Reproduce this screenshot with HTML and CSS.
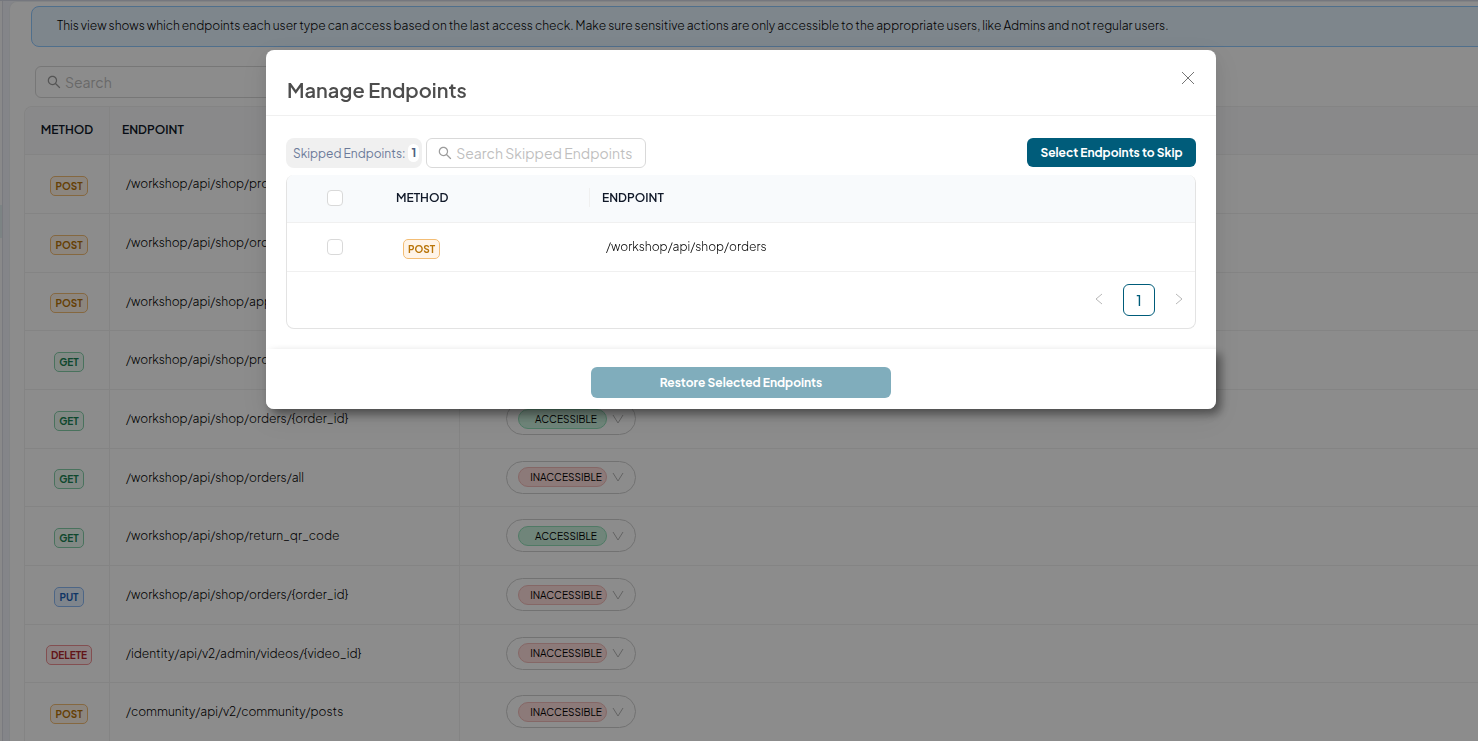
FILE: index.html
```html
<!DOCTYPE html>
<html lang="en">
<head>
  <meta charset="UTF-8">
  <title>Manage Endpoints</title>
  <link rel="stylesheet" href="styles.css">
</head>
<body>
  <div class="app">
    <div class="rail"><div class="rail-active"></div></div>
    <main class="panel">
      <p class="banner">This view shows which endpoints each user type can access based on the last access check. Make sure sensitive actions are only accessible to the appropriate users, like Admins and not regular users.</p>

      <label class="search page-search">
        <svg class="icon" viewBox="64 64 896 896" aria-hidden="true"><path d="M909.6 854.5L649.9 594.8C690.2 542.7 712 479 712 412c0-80.2-31.3-155.4-87.9-212.1-56.6-56.7-132-87.9-212.1-87.9s-155.5 31.3-212.1 87.9C143.2 256.5 112 331.8 112 412c0 80.1 31.3 155.5 87.9 212.1C256.5 680.8 331.8 712 412 712c67 0 130.6-21.8 182.7-62l259.7 259.6a8.2 8.2 0 0011.6 0l43.6-43.5a8.2 8.2 0 000-11.6zM570.4 570.4C528 612.7 471.8 636 412 636s-116-23.3-158.4-65.6C211.3 528 188 471.8 188 412s23.3-116.1 65.6-158.4C296 211.3 352.2 188 412 188s116.1 23.2 158.4 65.6S636 352.2 636 412s-23.3 116.1-65.6 158.4z"/></svg>
        <input type="text" placeholder="Search" aria-label="Search">
      </label>

      <table class="access-table">
        <colgroup><col class="col-method"><col class="col-endpoint"><col></colgroup>
        <thead>
          <tr><th>METHOD</th><th>ENDPOINT</th><th></th></tr>
        </thead>
        <tbody>
          <tr>
            <td><span class="tag post">POST</span></td>
            <td>/workshop/api/shop/products</td>
            <td></td>
          </tr>
          <tr>
            <td><span class="tag post">POST</span></td>
            <td>/workshop/api/shop/orders</td>
            <td></td>
          </tr>
          <tr>
            <td><span class="tag post">POST</span></td>
            <td>/workshop/api/shop/apply_coupon</td>
            <td></td>
          </tr>
          <tr>
            <td><span class="tag get">GET</span></td>
            <td>/workshop/api/shop/products</td>
            <td></td>
          </tr>
          <tr>
            <td><span class="tag get">GET</span></td>
            <td>/workshop/api/shop/orders/{order_id}</td>
            <td>
              <span class="access">
                <select class="yes" aria-label="Access"><option selected>ACCESSIBLE</option><option>INACCESSIBLE</option></select>
                <svg class="chevron" viewBox="0 0 12 12" aria-hidden="true"><path d="M1 2l5 8 5-8"/></svg>
              </span>
            </td>
          </tr>
          <tr>
            <td><span class="tag get">GET</span></td>
            <td>/workshop/api/shop/orders/all</td>
            <td>
              <span class="access">
                <select class="no" aria-label="Access"><option>ACCESSIBLE</option><option selected>INACCESSIBLE</option></select>
                <svg class="chevron" viewBox="0 0 12 12" aria-hidden="true"><path d="M1 2l5 8 5-8"/></svg>
              </span>
            </td>
          </tr>
          <tr>
            <td><span class="tag get">GET</span></td>
            <td>/workshop/api/shop/return_qr_code</td>
            <td>
              <span class="access">
                <select class="yes" aria-label="Access"><option selected>ACCESSIBLE</option><option>INACCESSIBLE</option></select>
                <svg class="chevron" viewBox="0 0 12 12" aria-hidden="true"><path d="M1 2l5 8 5-8"/></svg>
              </span>
            </td>
          </tr>
          <tr>
            <td><span class="tag put">PUT</span></td>
            <td>/workshop/api/shop/orders/{order_id}</td>
            <td>
              <span class="access">
                <select class="no" aria-label="Access"><option>ACCESSIBLE</option><option selected>INACCESSIBLE</option></select>
                <svg class="chevron" viewBox="0 0 12 12" aria-hidden="true"><path d="M1 2l5 8 5-8"/></svg>
              </span>
            </td>
          </tr>
          <tr>
            <td><span class="tag delete">DELETE</span></td>
            <td>/identity/api/v2/admin/videos/{video_id}</td>
            <td>
              <span class="access">
                <select class="no" aria-label="Access"><option>ACCESSIBLE</option><option selected>INACCESSIBLE</option></select>
                <svg class="chevron" viewBox="0 0 12 12" aria-hidden="true"><path d="M1 2l5 8 5-8"/></svg>
              </span>
            </td>
          </tr>
          <tr>
            <td><span class="tag post">POST</span></td>
            <td>/community/api/v2/community/posts</td>
            <td>
              <span class="access">
                <select class="no" aria-label="Access"><option>ACCESSIBLE</option><option selected>INACCESSIBLE</option></select>
                <svg class="chevron" viewBox="0 0 12 12" aria-hidden="true"><path d="M1 2l5 8 5-8"/></svg>
              </span>
            </td>
          </tr>
        </tbody>
      </table>
    </main>
  </div>

  <div class="overlay">
    <div class="modal" role="dialog" aria-labelledby="modal-title">
      <header class="modal-header">
        <h2 id="modal-title">Manage Endpoints</h2>
        <button class="close" aria-label="Close">
          <svg viewBox="0 0 16 16" aria-hidden="true"><path d="M2 2l12 12M14 2L2 14"/></svg>
        </button>
      </header>

      <div class="modal-body">
        <div class="toolbar">
          <div class="count">Skipped Endpoints: <b>1</b></div>
          <label class="search skip-search">
            <svg class="icon" viewBox="64 64 896 896" aria-hidden="true"><path d="M909.6 854.5L649.9 594.8C690.2 542.7 712 479 712 412c0-80.2-31.3-155.4-87.9-212.1-56.6-56.7-132-87.9-212.1-87.9s-155.5 31.3-212.1 87.9C143.2 256.5 112 331.8 112 412c0 80.1 31.3 155.5 87.9 212.1C256.5 680.8 331.8 712 412 712c67 0 130.6-21.8 182.7-62l259.7 259.6a8.2 8.2 0 0011.6 0l43.6-43.5a8.2 8.2 0 000-11.6zM570.4 570.4C528 612.7 471.8 636 412 636s-116-23.3-158.4-65.6C211.3 528 188 471.8 188 412s23.3-116.1 65.6-158.4C296 211.3 352.2 188 412 188s116.1 23.2 158.4 65.6S636 352.2 636 412s-23.3 116.1-65.6 158.4z"/></svg>
            <input type="text" placeholder="Search Skipped Endpoints" aria-label="Search Skipped Endpoints">
          </label>
          <button class="btn select-btn">Select Endpoints to Skip</button>
        </div>

        <div class="skip-box">
          <table class="skip-table">
            <colgroup><col class="col-check"><col class="col-skip-method"><col></colgroup>
            <thead>
              <tr>
                <th><input type="checkbox" aria-label="Select all"></th>
                <th>METHOD</th>
                <th><span class="split">ENDPOINT</span></th>
              </tr>
            </thead>
            <tbody>
              <tr>
                <td><input type="checkbox" aria-label="Select /workshop/api/shop/orders"></td>
                <td><span class="tag post">POST</span></td>
                <td>/workshop/api/shop/orders</td>
              </tr>
            </tbody>
          </table>
          <nav class="pagination">
            <button class="page-arrow" aria-label="Previous page" disabled><svg viewBox="0 0 10 12" aria-hidden="true"><path d="M8 1L2 6l6 5"/></svg></button>
            <button class="page-current">1</button>
            <button class="page-arrow" aria-label="Next page" disabled><svg viewBox="0 0 10 12" aria-hidden="true"><path d="M2 1l6 5-6 5"/></svg></button>
          </nav>
        </div>
      </div>

      <footer class="modal-footer">
        <button class="btn restore-btn" disabled>Restore Selected Endpoints</button>
      </footer>
    </div>
  </div>
</body>
</html>
```
FILE: styles.css
```css
* {
  box-sizing: border-box;
}
body {
  margin: 0;
  height: 100vh;
  overflow: hidden;
  background: #f0f2fa;
  color: #000;
  font-family: "Plus Jakarta Sans", Inter, sans-serif;
  font-size: 12px;
  font-weight: 300;
}
button, input, select {
  font: inherit;
}
button {
  padding: 0;
  border: none;
  background: none;
  cursor: pointer;
}

/* page behind the dialog */
.app {
  display: flex;
  height: 100vh;
  overflow: hidden;
  border-top: 1px solid #d5d9e6;
}
.rail {
  flex: none;
  width: 3px;
  margin-right: 6px;
  padding-top: 204px;
  background: #fafafc;
  border-right: 1px solid #dcdfe8;
}
.rail-active {
  height: 33px;
  background: #e2eff0;
}
.panel {
  flex: 1;
  min-width: 0;
  margin-right: -20px;
  padding: 4px 0 0 14px;
  background: #fff;
  border: 1px solid #eceef2;
  border-bottom: none;
  border-radius: 8px 0 0 0;
}
.banner {
  height: 41px;
  margin: 0 0 19px 7px;
  padding: 0 25px;
  line-height: 38px;
  white-space: nowrap;
  background: #e6f4ff;
  border: 1px solid #91caff;
  border-radius: 8px;
}
.search {
  display: flex;
  align-items: center;
  gap: 4px;
  padding: 0 11px;
  background: #fff;
  border: 1px solid #d9d9d9;
  border-radius: 6px;
}
.search .icon {
  flex: none;
  width: 14px;
  height: 14px;
  fill: #9c9c9c;
}
.search input {
  width: 100%;
  min-width: 0;
  padding: 0;
  border: none;
  outline: none;
  background: none;
  font-size: 14px;
  font-weight: 400;
}
.search input::placeholder {
  color: #bfbfbf;
}
.page-search {
  width: 300px;
  height: 32px;
  margin: 0 0 8px 11px;
}
table {
  width: 100%;
  table-layout: fixed;
  border-collapse: separate;
  border-spacing: 0;
}
th {
  text-align: left;
  font-size: 12px;
  font-weight: 600;
  color: #101828;
  background: #f9fafb;
  border-bottom: 1px solid #f0f0f0;
}
td {
  border-bottom: 1px solid #f0f0f0;
}
.access-table {
  border-left: 1px solid #f0f0f0;
  border-top: 1px solid #f0f0f0;
  border-radius: 8px 0 0 0;
}
.access-table th,
.access-table td {
  padding: 0 16px 1px;
  border-right: 1px solid #f0f0f0;
}
.access-table th {
  height: 48px;
  padding: 0 12px 2px;
}
.access-table th:first-child {
  padding: 0 0 2px;
  text-align: center;
  border-top-left-radius: 8px;
}
.access-table td {
  height: 59px;
}
.access-table tr:nth-child(3n) td {
  height: 58px;
}
.access-table td:first-child {
  padding: 3px 0 0 4px;
  text-align: center;
}
.access-table td:last-child {
  padding-left: 46px;
}
.col-method {
  width: 85px;
}
.col-endpoint {
  width: 350px;
}

.tag {
  display: inline-block;
  padding: 0 4px;
  line-height: 18px;
  font-size: 10px;
  font-weight: 700;
  border: 1px solid;
  border-radius: 5px;
}
.post {
  color: #b97509;
  background: #fff4e8;
  border-color: #f3bd75;
}
.get {
  color: #1b8354;
  background: #edfaf3;
  border-color: #86cfaa;
}
.put {
  color: #1b62b8;
  background: #e8f2ff;
  border-color: #8dbaf5;
}
.delete {
  color: #b3262d;
  background: #ffeced;
  border-color: #ee9094;
}

.access {
  display: flex;
  align-items: center;
  gap: 5px;
  width: 130px;
  height: 33px;
  padding-left: 11px;
  border: 1px solid #d0d0d0;
  border-radius: 17px;
}
.access select {
  appearance: none;
  width: 89px;
  height: 20px;
  padding: 0 0 0 7px;
  font-size: 10px;
  font-weight: 400;
  text-align: center;
  text-align-last: center;
  border: 1px solid;
  border-radius: 10px;
}
.access .yes {
  color: #000;
  background: #ccf3df;
  border-color: #92dfb9;
}
.access .no {
  color: #000;
  background: #ffdedc;
  border-color: #f3bcba;
}
.chevron {
  width: 12px;
  height: 12px;
  fill: none;
  stroke: #b5b5b5;
}

/* dialog */
.overlay {
  position: fixed;
  inset: 0;
  display: flex;
  justify-content: center;
  align-items: flex-start;
  padding: 50px 12px 0 16px;
  background: rgba(0, 0, 0, 0.45);
}
.modal {
  width: 100%;
  max-width: 950px;
  background: #fff;
  border-radius: 8px;
  box-shadow: 0 6px 16px rgba(0, 0, 0, 0.08), 0 9px 28px 8px rgba(0, 0, 0, 0.05);
}
.modal-header {
  display: flex;
  justify-content: space-between;
  padding: 20px 20px 0 21px;
  height: 66px;
  border-bottom: 1px solid #f0f0f0;
}
.modal-header h2 {
  margin: 0;
  line-height: 40px;
  font-size: 20px;
  font-weight: 600;
  color: #4d4d4d;
}
.close {
  height: 16px;
}
.close svg {
  display: block;
  width: 16px;
  height: 16px;
  fill: none;
  stroke: #757575;
}
.modal-body {
  padding: 22px 20px 20px;
}
.toolbar {
  display: flex;
  gap: 4px;
  margin-bottom: 7px;
}
.count {
  display: flex;
  align-items: center;
  gap: 3px;
  height: 30px;
  padding: 0 3px 0 7px;
  font-size: 12px;
  font-weight: 400;
  color: #6b7a99;
  background: #f0f0f0;
  border-radius: 8px;
}
.count b {
  padding: 0 3px;
  line-height: 18px;
  font-weight: 700;
  color: #4f5f80;
  background: #fff;
  border-radius: 6px;
}
.skip-search {
  width: 220px;
  height: 30px;
}
.btn {
  color: #fff;
  font-size: 12px;
  font-weight: 700;
  background: #005c7a;
  border-radius: 6px;
}
.select-btn {
  width: 169px;
  height: 29px;
  margin-left: auto;
}
.skip-box {
  border: 1px solid #e3e3e3;
  border-top: none;
  border-radius: 8px;
  overflow: hidden;
}
.skip-table th {
  height: 48px;
  padding: 0 12px 2px;
  background: #f8fafc;
}
.skip-table td {
  height: 49px;
  padding: 0 16px 1px;
}
.skip-table td:nth-child(2) {
  padding: 4px 19px 0;
}
.skip-table th:first-child,
.skip-table td:first-child {
  padding: 0 2px 1px 0;
  text-align: center;
}
.split {
  display: block;
  margin-left: -13px;
  padding-left: 12px;
  line-height: 19px;
  border-left: 1px solid #f0f0f0;
}
.col-check {
  width: 97px;
}
.col-skip-method {
  width: 206px;
}
.skip-table input {
  appearance: none;
  display: block;
  width: 16px;
  height: 16px;
  margin: 0 auto;
  background: #fff;
  border: 1px solid #d9d9d9;
  border-radius: 4px;
}
.pagination {
  display: flex;
  justify-content: flex-end;
  gap: 8px;
  padding: 12px 0;
}
.page-arrow {
  width: 32px;
  height: 32px;
}
.page-arrow svg {
  width: 10px;
  height: 12px;
  fill: none;
  stroke: #b8b8b8;
}
.page-current {
  width: 32px;
  height: 32px;
  font-size: 14px;
  font-weight: 500;
  color: #005c7a;
  border: 1px solid #005c7a;
  border-radius: 6px;
}
.modal-footer {
  display: flex;
  justify-content: center;
  padding: 18px 0 11px;
  background: #fff;
  border-radius: 0 0 8px 8px;
  box-shadow: 5px 5px 10px rgba(0, 0, 0, 0.4);
}
.restore-btn {
  width: 300px;
  height: 31px;
  background: #80adbc;
}
```
